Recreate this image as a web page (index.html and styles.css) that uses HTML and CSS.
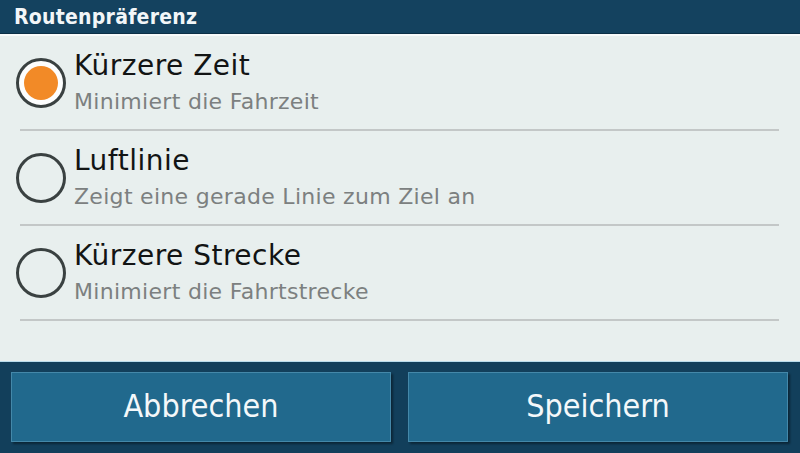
FILE: index.html
```html
<!DOCTYPE html>
<html lang="de">
<head>
    <meta charset="UTF-8">
    <meta name="viewport" content="width=device-width, initial-scale=1.0">
    <title>Routenpräferenz</title>
    <link rel="stylesheet" href="styles.css">
</head>
<body>
    <div class="screen">
        <div class="title-bar">Routenpräferenz</div>

        <div class="options">
            <div class="option">
                <span class="radio selected"><span class="dot"></span></span>
                <div class="option-text">
                    <div class="option-name">Kürzere Zeit</div>
                    <div class="option-desc">Minimiert die Fahrzeit</div>
                </div>
            </div>
            <div class="divider"></div>

            <div class="option">
                <span class="radio"></span>
                <div class="option-text">
                    <div class="option-name">Luftlinie</div>
                    <div class="option-desc">Zeigt eine gerade Linie zum Ziel an</div>
                </div>
            </div>
            <div class="divider"></div>

            <div class="option">
                <span class="radio"></span>
                <div class="option-text">
                    <div class="option-name">Kürzere Strecke</div>
                    <div class="option-desc">Minimiert die Fahrtstrecke</div>
                </div>
            </div>
            <div class="divider"></div>
        </div>

        <div class="footer">
            <button class="btn">Abbrechen</button>
            <button class="btn">Speichern</button>
        </div>
    </div>
</body>
</html>
```

FILE: styles.css
```css
*, *::before, *::after {
    box-sizing: border-box;
}
body {
    margin: 0;
    padding: 0;
    background-color: #e8efee;
    font-family: "DejaVu Sans", sans-serif;
}
.screen {
    display: flex;
    flex-direction: column;
    width: 800px;
    height: 453px;
    overflow: hidden;
}

/* top bar */
.title-bar {
    height: 34px;
    padding: 2px 0 0 14px;
    line-height: 31px;
    background-color: #14425f;
    border-bottom: 1px solid #0c2f46;
    color: #f2f6f8;
    font-family: "DejaVu Sans Condensed", "DejaVu Sans", sans-serif;
    font-stretch: condensed;
    font-weight: bold;
    font-size: 21px;
    letter-spacing: 0.25px;
}

/* list of choices */
.options {
    flex: 1;
    border-top: 2px solid #f8fbfb;
}
.option {
    display: flex;
    align-items: center;
    height: 93px;
    padding-left: 16px;
}
.radio {
    display: flex;
    align-items: center;
    justify-content: center;
    flex: none;
    width: 50px;
    height: 50px;
    border: 3px solid #3a4141;
    border-radius: 50%;
}
.radio.selected {
    background-color: #fdfefe;
}
.dot {
    width: 34px;
    height: 34px;
    border-radius: 50%;
    background-color: #f28a27;
}
.option-text {
    margin-left: 8px;
}
.option-name {
    line-height: 38px;
    font-size: 28px;
    letter-spacing: 0.5px;
    color: #121414;
}
.option-desc {
    line-height: 34px;
    font-size: 22px;
    letter-spacing: 0.3px;
    color: #7c8080;
}
.divider {
    height: 2px;
    margin: 0 21px 0 20px;
    background-color: #c3c7c7;
}

/* bottom buttons */
.footer {
    display: grid;
    grid-template-columns: 1fr 1fr;
    gap: 17px;
    height: 92px;
    padding: 10px 12px 11px 11px;
    background-color: #123f5b;
    border-top: 1px solid #b9dceb;
}
.btn {
    margin: 0;
    border: 1px solid #4488a9;
    background-color: #21698d;
    box-shadow: 2px 2px 2px rgba(0, 0, 0, 0.4);
    color: #f4f8fa;
    font-family: "DejaVu Sans Condensed", "DejaVu Sans", sans-serif;
    font-stretch: condensed;
    font-size: 32px;
    padding: 0 0 2px 0;
}
```
